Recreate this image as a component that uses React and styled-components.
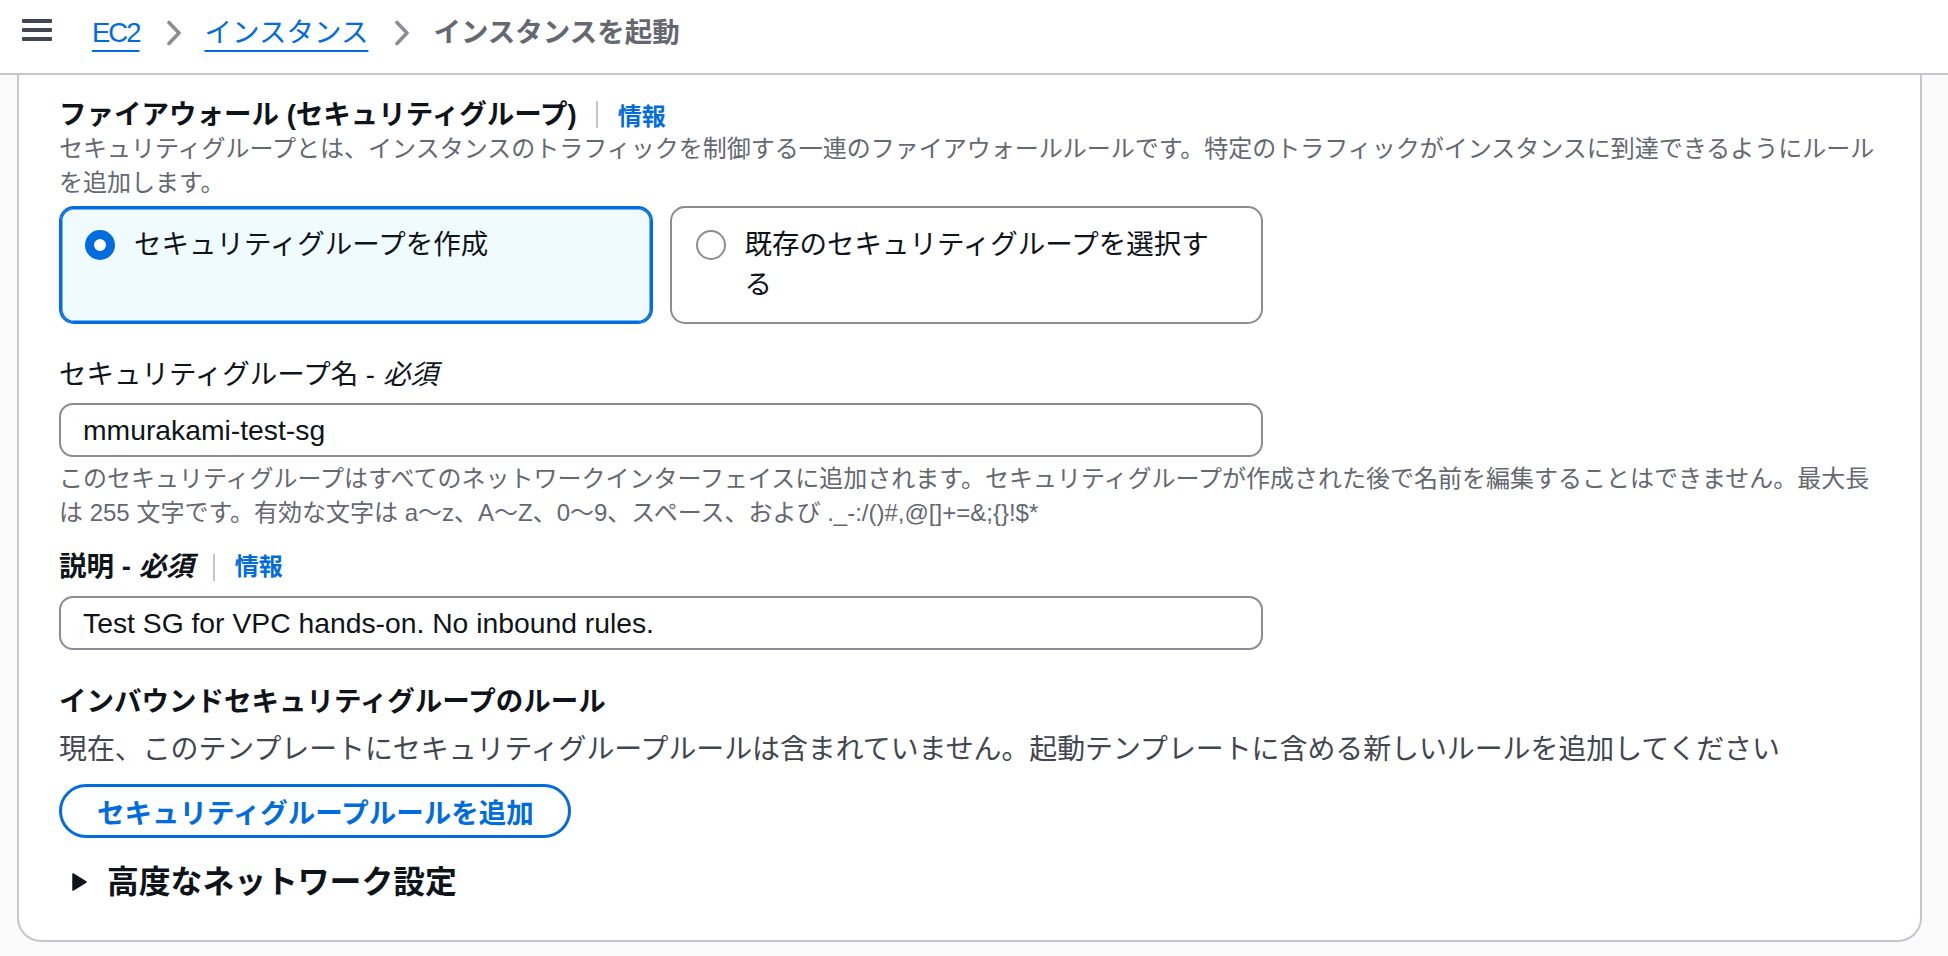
import styled, { createGlobalStyle } from 'styled-components'

const GlobalStyle = createGlobalStyle`
  html, body {
    margin: 0;
    padding: 0;
  }
  body {
    background: #fbfbfb;
    font-family: "Liberation Sans", "Noto Sans CJK JP", sans-serif;
    color: #0f141a;
  }
  * {
    box-sizing: border-box;
  }
`

const Header = styled.header`
  display: flex;
  align-items: flex-start;
  height: 75px;
  padding: 16px 0 0 22px;
  background: #fff;
  border-bottom: 2px solid #c6c6cd;
`

const MenuButton = styled.button`
  display: flex;
  margin: 3px 40px 0 0;
  padding: 0;
  border: none;
  background: none;
`

const Crumbs = styled.nav`
  display: flex;
  align-items: center;
  height: 34px;
  font-size: 27.5px;
  line-height: 34px;
`

const CrumbLink = styled.a`
  color: #006ce0;
  letter-spacing: ${(p) => (p.$tight ? '-2px' : '0')};
  text-decoration: underline;
  text-decoration-thickness: 2px;
  text-underline-offset: 8px;
`

const CrumbCurrent = styled.span`
  color: #656871;
  font-weight: 700;
`

const Chevron = styled.svg`
  margin: 0 23px 0 26px;
`

const Panel = styled.main`
  margin: 0 26px 0 17px;
  padding: 22px 34px 36px 40px;
  background: #fff;
  border: 2px solid #c6c6cd;
  border-top: none;
  border-radius: 0 0 24px 24px;
`

const Row = styled.div`
  display: flex;
  align-items: center;
  margin-top: ${(p) => p.$mt || 0}px;
`

const Title = styled.h2`
  margin: 0;
  font-size: 27.5px;
  line-height: ${(p) => p.$lh || 31}px;
  font-weight: 700;
  color: #0f141a;
`

const Divider = styled.span`
  width: 2px;
  height: 27px;
  margin: 0 20px 0 19px;
  background: #c6c6cd;
`

const InfoLink = styled.a`
  font-size: 24px;
  font-weight: 700;
  color: #006ce0;
  text-decoration: none;
`

const Description = styled.p`
  margin: ${(p) => p.$mt || 0}px 0 0;
  font-size: 24px;
  line-height: 34px;
  color: #656871;
`

const BodyText = styled.p`
  margin: ${(p) => p.$mt || 0}px 0 0;
  font-size: 27.9px;
  line-height: 40px;
  color: #424650;
`

const TileGroup = styled.div`
  display: grid;
  grid-template-columns: 1fr 1fr;
  gap: 17px;
  width: 1204px;
  margin-top: 6px;
`

const Tile = styled.label`
  display: flex;
  align-items: flex-start;
  gap: 19px;
  padding: 17px 40px 17px 24px;
  border: 2px solid ${(p) => (p.$checked ? '#006ce0' : '#8c8c94')};
  box-shadow: ${(p) => (p.$checked ? 'inset 0 0 0 1.5px #006ce0' : 'none')};
  border-radius: 15px;
  background: ${(p) => (p.$checked ? '#f0fbff' : '#fff')};
  cursor: pointer;
`

const Radio = styled.span`
  flex: none;
  width: 30px;
  height: 30px;
  margin-top: 5px;
  border-radius: 50%;
  background: #fff;
  border: ${(p) => (p.$checked ? '9.5px solid #006ce0' : '2px solid #8c8c94')};
`

const TileText = styled.span`
  font-size: 27.5px;
  line-height: 40px;
  color: #0f141a;
`

const FieldLabel = styled.div`
  display: flex;
  align-items: center;
  margin-top: ${(p) => p.$mt || 0}px;
  font-size: 27.5px;
  line-height: 40px;
  font-weight: ${(p) => (p.$bold ? 700 : 400)};
  color: #0f141a;

  & em {
    margin-left: 8px;
    font-style: italic;
  }
`

const TextInput = styled.input`
  display: block;
  width: 1204px;
  height: 54px;
  margin-top: ${(p) => p.$mt || 0}px;
  padding: 0 22px;
  border: 2px solid #8c8c94;
  border-radius: 14px;
  background: #fff;
  font-family: "Liberation Sans", "Noto Sans CJK JP", sans-serif;
  font-size: 28.3px;
  color: #0f141a;
  outline: none;
`

const OutlineButton = styled.button`
  display: inline-flex;
  align-items: center;
  height: 54px;
  margin-top: 14px;
  padding: 0 34px 0 35px;
  border: 3px solid #006ce0;
  border-radius: 999px;
  background: #fff;
  font-family: inherit;
  font-size: 27.5px;
  font-weight: 700;
  color: #006ce0;
  cursor: pointer;
`

const Expander = styled.div`
  display: flex;
  align-items: center;
  gap: 20px;
  margin: 22px 0 0 13px;
  font-size: 31.8px;
  line-height: 44px;
  font-weight: 700;
  color: #0f141a;
`

function ChevronIcon() {
  return (
    <Chevron width="16" height="26" viewBox="0 0 16 26">
      <path d="M3 2.5 L13 13 L3 23.5" fill="none" stroke="#8c8c94" strokeWidth="3.6" strokeLinecap="round" strokeLinejoin="round" />
    </Chevron>
  )
}

export default function App() {
  return (
    <>
      <GlobalStyle />
      <Header>
        <MenuButton aria-label="menu">
          <svg width="30" height="22" viewBox="0 0 30 22">
            <rect x="0" y="0" width="30" height="4" rx="1" fill="#424650" />
            <rect x="0" y="9" width="30" height="4" rx="1" fill="#424650" />
            <rect x="0" y="18" width="30" height="4" rx="1" fill="#424650" />
          </svg>
        </MenuButton>
        <Crumbs>
          <CrumbLink href="#" $tight>EC2</CrumbLink>
          <ChevronIcon />
          <CrumbLink href="#">インスタンス</CrumbLink>
          <ChevronIcon />
          <CrumbCurrent>インスタンスを起動</CrumbCurrent>
        </Crumbs>
      </Header>

      <Panel>
        <Row>
          <Title>ファイアウォール (セキュリティグループ)</Title>
          <Divider />
          <InfoLink href="#">情報</InfoLink>
        </Row>
        <Description>
          セキュリティグループとは、インスタンスのトラフィックを制御する一連のファイアウォールルールです。特定のトラフィックがインスタンスに到達できるようにルールを追加します。
        </Description>

        <TileGroup>
          <Tile $checked>
            <Radio $checked />
            <TileText>セキュリティグループを作成</TileText>
          </Tile>
          <Tile>
            <Radio />
            <TileText>既存のセキュリティグループを選択する</TileText>
          </Tile>
        </TileGroup>

        <FieldLabel $mt={31}>
          セキュリティグループ名 -<em>必須</em>
        </FieldLabel>
        <TextInput $mt={8} defaultValue="mmurakami-test-sg" />
        <Description $mt={5}>
          このセキュリティグループはすべてのネットワークインターフェイスに追加されます。セキュリティグループが作成された後で名前を編集することはできません。最大長は 255 文字です。有効な文字は a〜z、A〜Z、0〜9、スペース、および ._-:/()#,@[]+=&;{'{}'}!$*
        </Description>

        <FieldLabel $mt={17} $bold>
          説明 -<em>必須</em>
          <Divider />
          <InfoLink href="#">情報</InfoLink>
        </FieldLabel>
        <TextInput $mt={9} defaultValue="Test SG for VPC hands-on. No inbound rules." />

        <Row $mt={32}>
          <Title $lh={40}>インバウンドセキュリティグループのルール</Title>
        </Row>
        <BodyText $mt={8}>
          現在、このテンプレートにセキュリティグループルールは含まれていません。起動テンプレートに含める新しいルールを追加してください
        </BodyText>
        <OutlineButton>セキュリティグループルールを追加</OutlineButton>

        <Expander>
          <svg width="15" height="18" viewBox="0 0 15 18">
            <path d="M1 1 L14 9 L1 17 Z" fill="#0f141a" stroke="#0f141a" strokeWidth="1.5" strokeLinejoin="round" />
          </svg>
          高度なネットワーク設定
        </Expander>
      </Panel>
    </>
  )
}
